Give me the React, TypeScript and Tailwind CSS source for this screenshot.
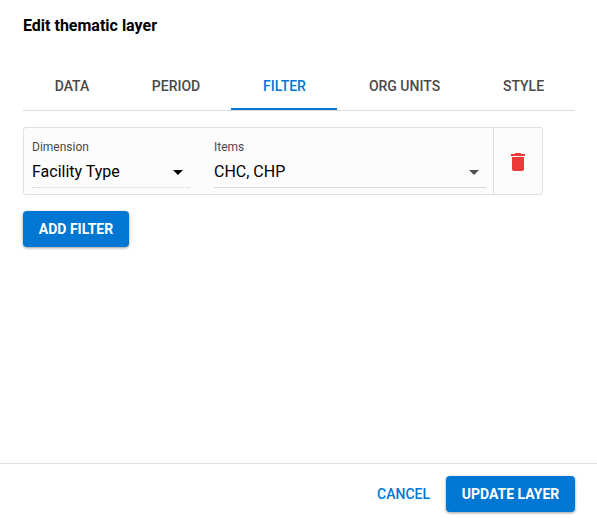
const tabs = [
  { label: 'DATA', width: 'w-[97px]' },
  { label: 'PERIOD', width: 'w-[111px]' },
  { label: 'FILTER', width: 'w-[106px]' },
  { label: 'ORG UNITS', width: 'w-[134px]' },
  { label: 'STYLE', width: 'w-[104px]' },
];

function Caret({ className }: { className: string }) {
  return (
    <svg viewBox="0 0 24 24" className={`size-6 shrink-0 ${className}`} fill="currentColor">
      <path d="M7 10l5 5 5-5z" />
    </svg>
  );
}

function Field({ label, value, className, caret }: { label: string; value: string; className: string; caret: string }) {
  return (
    <div className={`flex h-[53px] flex-col border-b ${className}`}>
      <span className="mt-1 text-[12px] leading-4 text-[#4a4a4a]">{label}</span>
      <div className="mt-1 flex h-[26px] items-center justify-between">
        <span className="text-base leading-6 text-black">{value}</span>
        <Caret className={caret} />
      </div>
    </div>
  );
}

export default function App() {
  return (
    <div className="flex h-[523px] w-[597px] flex-col bg-white font-[Roboto,sans-serif]">
      <main className="flex-1 pl-[23px] pr-[22px]">
        <h1 className="pt-3.5 text-base leading-6 font-bold text-black">Edit thematic layer</h1>
        <nav className="mt-6 flex h-[49px] border-b border-[#dcdcdc]">
          {tabs.map((tab) => (
            <button
              key={tab.label}
              className={`flex h-12 items-center justify-center border-b-2 pt-0.5 pl-px text-sm font-medium ${tab.width} ${
                tab.label === 'FILTER' ? 'border-[#0077d2] text-[#0077d2]' : 'border-transparent text-[#494949]'
              }`}
            >
              {tab.label}
            </button>
          ))}
        </nav>
        <section className="mt-4 flex h-[68px] w-[520px] rounded-[3px] border border-[#e0e0e0] bg-[#fcfcfc]">
          <div className="flex flex-1 pt-[7px] pl-2">
            <Field label="Dimension" value="Facility Type" className="w-[158px] border-dotted border-[#d2d2d2]" caret="text-black" />
            <Field label="Items" value="CHC, CHP" className="ml-6 w-[272px] border-[#dadada]" caret="text-[#505050]" />
          </div>
          <button aria-label="Remove filter" className="flex w-[49px] items-center justify-center border-l border-[#e0e0e0] pt-0.5">
            <svg viewBox="0 0 24 24" className="size-6 text-[#ee3939]" fill="currentColor">
              <path d="M6 19c0 1.1.9 2 2 2h8c1.1 0 2-.9 2-2V7H6v12zM19 4h-3.5l-1-1h-5l-1 1H5v2h14V4z" />
            </svg>
          </button>
        </section>
        <button className="mt-4 h-9 w-[106px] rounded bg-[#0077d2] text-sm font-bold text-white shadow-[0_1px_3px_rgba(0,0,0,0.4)]">
          ADD FILTER
        </button>
      </main>
      <footer className="flex h-[60px] justify-end border-t border-[#dedede] pt-3 pr-[22px]">
        <button className="mr-4 h-9 text-sm font-medium text-[#0077d2]">CANCEL</button>
        <button className="h-9 w-[129px] rounded bg-[#0077d2] text-sm font-bold text-white shadow-[0_1px_3px_rgba(0,0,0,0.4)]">
          UPDATE LAYER
        </button>
      </footer>
    </div>
  );
}
